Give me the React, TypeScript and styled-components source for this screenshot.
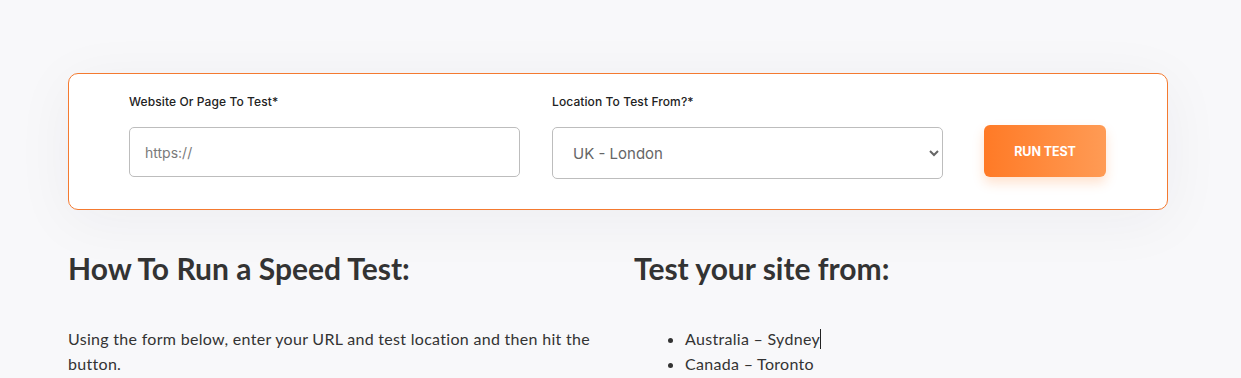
import React from "react";
import styled, { createGlobalStyle } from "styled-components";

const Global = createGlobalStyle`
  html, body { margin: 0; padding: 0; background: #f8f8fa; }
  body { font-family: Lato, "Liberation Sans", sans-serif; color: #333; }
  * { box-sizing: border-box; }
`;

const Page = styled.div`
  width: 1100px;
  margin: 0 0 0 68px;
  padding-top: 73px;
`;

const Card = styled.form`
  display: flex;
  align-items: flex-start;
  background: #fff;
  border: 1px solid #f47a30;
  border-radius: 10px;
  padding: 20px 61px 30px 60px;
  box-shadow: 0 10px 60px rgba(30, 30, 60, 0.05);
`;

const Field = styled.div<{ $gap?: number }>`
  display: flex;
  flex-direction: column;
  width: 391px;
  margin-right: ${(p) => p.$gap ?? 0}px;
`;

const Label = styled.label`
  font-family: Inter, "Liberation Sans", sans-serif;
  font-size: 12px;
  font-weight: 500;
  letter-spacing: 0.1px;
  line-height: 16px;
  color: #222;
  margin-bottom: 17px;
`;

const TextInput = styled.input`
  height: 50px;
  border: 1px solid #bdbdbd;
  border-radius: 5px;
  padding: 0 15px;
  font-family: Inter, "Liberation Sans", sans-serif;
  font-size: 14px;
  color: #555;
  background: #fff;
  outline: none;
  &::placeholder { color: #7a7a7a; }
`;

const Select = styled.select`
  height: 52px;
  border: 1px solid #bdbdbd;
  border-radius: 5px;
  padding: 0 16px;
  font-family: Inter, "Liberation Sans", sans-serif;
  font-size: 15px;
  color: #666;
  background: #fff;
  outline: none;
`;

const RunButton = styled.button`
  margin-top: 31px;
  width: 122px;
  height: 52px;
  border: none;
  border-radius: 6px;
  background: linear-gradient(90deg, #ff7a26 0%, #ff9b55 100%);
  box-shadow: 0 6px 12px rgba(255, 122, 38, 0.22);
  color: #fff;
  font-family: Inter, "Liberation Sans", sans-serif;
  font-size: 12.5px;
  font-weight: 700;
  letter-spacing: -0.1px;
  cursor: pointer;
`;

const Columns = styled.div`
  display: grid;
  grid-template-columns: 1fr 1fr;
  column-gap: 32px;
  margin-top: 40px;
`;

const Heading = styled.h2`
  margin: 0 0 40px;
  font-family: Lato, sans-serif;
  font-size: 30px;
  font-weight: 700;
  line-height: 36px;
  color: #333;
`;

const Para = styled.p`
  margin: 0;
  font-size: 16px;
  letter-spacing: 0.3px;
  line-height: 25px;
  color: #333;
`;

const List = styled.ul`
  margin: 0;
  padding-left: 51px;
  font-size: 16px;
  letter-spacing: 0.3px;
  line-height: 25px;
  color: #333;
`;

const Caret = styled.span`
  display: inline-block;
  width: 1px;
  height: 20px;
  background: #222;
  vertical-align: -4px;
`;

export default function App() {
  return (
    <>
      <Global />
      <Page>
        <Card onSubmit={(e) => e.preventDefault()}>
          <Field $gap={32}>
            <Label>Website Or Page To Test*</Label>
            <TextInput placeholder="https://" />
          </Field>
          <Field $gap={41}>
            <Label>Location To Test From?*</Label>
            <Select defaultValue="uk">
              <option value="au">Australia - Sydney</option>
              <option value="ca">Canada - Toronto</option>
              <option value="uk">UK - London</option>
            </Select>
          </Field>
          <RunButton type="submit">RUN TEST</RunButton>
        </Card>
        <Columns>
          <div>
            <Heading>How To Run a Speed Test:</Heading>
            <Para>
              Using the form below, enter your URL and test location and then hit the button.
            </Para>
          </div>
          <div>
            <Heading>Test your site from:</Heading>
            <List>
              <li>
                Australia – Sydney<Caret />
              </li>
              <li>Canada – Toronto</li>
            </List>
          </div>
        </Columns>
      </Page>
    </>
  );
}
